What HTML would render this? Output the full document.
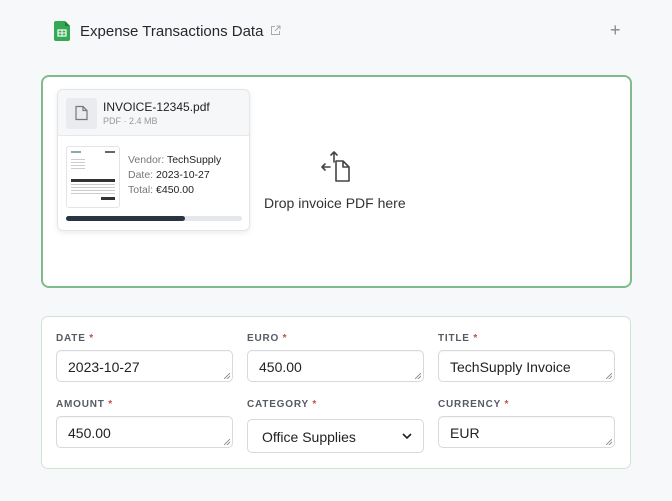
<!DOCTYPE html>
<html><head><meta charset="utf-8"><style>
*{box-sizing:border-box;margin:0;padding:0}
body{width:672px;height:501px;background:#f7f8fa;font-family:"Liberation Sans",sans-serif;color:#1f2328;position:relative;overflow:hidden}
.abs{position:absolute}
.title{left:80px;top:23px;font-size:15px;color:#24292f}
.drop{left:41px;top:75px;width:591px;height:213px;border:2px solid #80bb8d;border-radius:8px;background:#fff}
.card{left:57px;top:89px;width:193px;height:142px;background:#fff;border:1px solid #e3e5e8;border-radius:6px;box-shadow:0 2px 6px rgba(0,0,0,.08);overflow:hidden}
.chead{height:46px;background:#f6f7f8;border-bottom:1px solid #e6e8eb;position:relative}
.form{left:41px;top:316px;width:590px;height:153px;border:1px solid #cfe5d4;border-radius:7px;background:#fff}
.lbl{font-size:10px;font-weight:bold;letter-spacing:.8px;color:#555b63}
.lbl span{color:#c0504d}
.in{border:1px solid #d6d9dd;border-radius:5px;background:#fff;font-size:14px;padding:8px 11px;color:#222;box-shadow:inset 0 1px 1px rgba(0,0,0,.04)}
.in::after{content:"";position:absolute;right:2px;bottom:2px;width:6px;height:6px;background:linear-gradient(135deg,transparent 45%,#999 45%,#999 55%,transparent 55%,transparent 70%,#999 70%,#999 80%,transparent 80%)}
</style></head><body>
<svg class="abs" style="left:54px;top:21px" width="16" height="20" viewBox="0 0 16 20"><path d="M0 2a2 2 0 0 1 2-2h9l5 5v13a2 2 0 0 1-2 2H2a2 2 0 0 1-2-2z" fill="#34a853"/><path d="M11 0v5h5z" fill="#1e7e3a"/><rect x="4" y="9" width="8" height="6" fill="none" stroke="#fff" stroke-width="1.2"/><path d="M4 12h8M8 9v6" stroke="#fff" stroke-width="1"/></svg>
<div class="abs title">Expense Transactions Data</div>
<svg class="abs" style="left:270px;top:25px" width="11" height="11" viewBox="0 0 11 11" fill="none" stroke="#aaa" stroke-width="1"><path d="M5 1.5H1.5v8h8V6M6.5 1h3.5v3.5M10 1L5 6"/></svg>
<div class="abs" style="left:610px;top:20px;font-size:18px;color:#888;font-weight:300">+</div>
<div class="abs drop"></div>
<div class="abs card">
 <div class="chead">
  <div class="abs" style="left:8px;top:8px;width:31px;height:31px;background:#e9ebee;border-radius:3px"></div>
  <svg class="abs" style="left:17px;top:15px" width="13" height="16" viewBox="0 0 13 16" fill="none" stroke="#777" stroke-width="1.2"><path d="M1 1.5h7l4 4v9H1z M8 1.5v4h4"/></svg>
  <div class="abs" style="left:45px;top:10px;font-size:12px;color:#222">INVOICE-12345.pdf</div>
  <div class="abs" style="left:45px;top:26px;font-size:9px;color:#999">PDF · 2.4 MB</div>
 </div>
 <div class="abs" style="left:8px;top:56px;width:54px;height:62px;border:1px solid #e2e4e7;border-radius:3px;background:#fff">
  <div class="abs" style="left:4px;top:4px;width:10px;height:2px;background:#8aa"></div>
  <div class="abs" style="left:38px;top:4px;width:10px;height:2px;background:#666"></div>
  <div class="abs" style="left:4px;top:12px;width:14px;height:12px;background:repeating-linear-gradient(#ccc 0 1px,transparent 1px 3px)"></div>
  <div class="abs" style="left:4px;top:32px;width:44px;height:3px;background:#333"></div>
  <div class="abs" style="left:4px;top:37px;width:44px;height:10px;background:repeating-linear-gradient(#ccc 0 1px,transparent 1px 3px)"></div>
  <div class="abs" style="left:34px;top:50px;width:14px;height:3px;background:#333"></div>
 </div>
 <div class="abs" style="left:70px;top:63px;font-size:10.5px;line-height:15px;color:#777">Vendor: <span style="color:#222">TechSupply</span><br>Date: <span style="color:#222">2023-10-27</span><br>Total: <span style="color:#222">€450.00</span></div>
 <div class="abs" style="left:8px;top:126px;width:176px;height:5px;background:#e4e7eb;border-radius:3px"><div style="width:119px;height:5px;background:#2a3342;border-radius:3px"></div></div>
</div>
<svg class="abs" style="left:320px;top:150px" width="32" height="34" viewBox="0 0 32 34" fill="none" stroke="#444" stroke-width="1.6" stroke-linecap="round" stroke-linejoin="round"><path d="M14 12V2M11 5l3-3 3 3M10 17H2M5 14l-3 3 3 3"/><path d="M16 11h7l6 6v14H16z M23 11v6h6"/></svg>
<div class="abs" style="left:264px;top:195px;font-size:14px;color:#333">Drop invoice PDF here</div>
<div class="abs form"></div>
<div class="abs lbl" style="left:56px;top:333px">DATE <span>*</span></div>
<div class="abs lbl" style="left:247px;top:333px">EURO <span>*</span></div>
<div class="abs lbl" style="left:438px;top:333px">TITLE <span>*</span></div>
<div class="abs in" style="left:56px;top:350px;width:177px;height:32px">2023-10-27</div>
<div class="abs in" style="left:247px;top:350px;width:177px;height:32px">450.00</div>
<div class="abs in" style="left:438px;top:350px;width:177px;height:32px">TechSupply Invoice</div>
<div class="abs lbl" style="left:56px;top:399px">AMOUNT <span>*</span></div>
<div class="abs lbl" style="left:247px;top:399px">CATEGORY <span>*</span></div>
<div class="abs lbl" style="left:438px;top:399px">CURRENCY <span>*</span></div>
<div class="abs in" style="left:56px;top:416px;width:177px;height:32px">450.00</div>
<div class="abs" style="left:247px;top:419px;width:177px;height:34px;border:1px solid #d6d9dd;border-radius:5px;font-size:14px;padding:9px 14px;color:#222">Office Supplies</div>
<svg class="abs" style="left:402px;top:433px" width="10" height="7" viewBox="0 0 10 7" fill="none" stroke="#222" stroke-width="1.6"><path d="M1 1l4 4 4-4"/></svg>
<div class="abs in" style="left:438px;top:416px;width:177px;height:32px">EUR</div>
</body></html>
